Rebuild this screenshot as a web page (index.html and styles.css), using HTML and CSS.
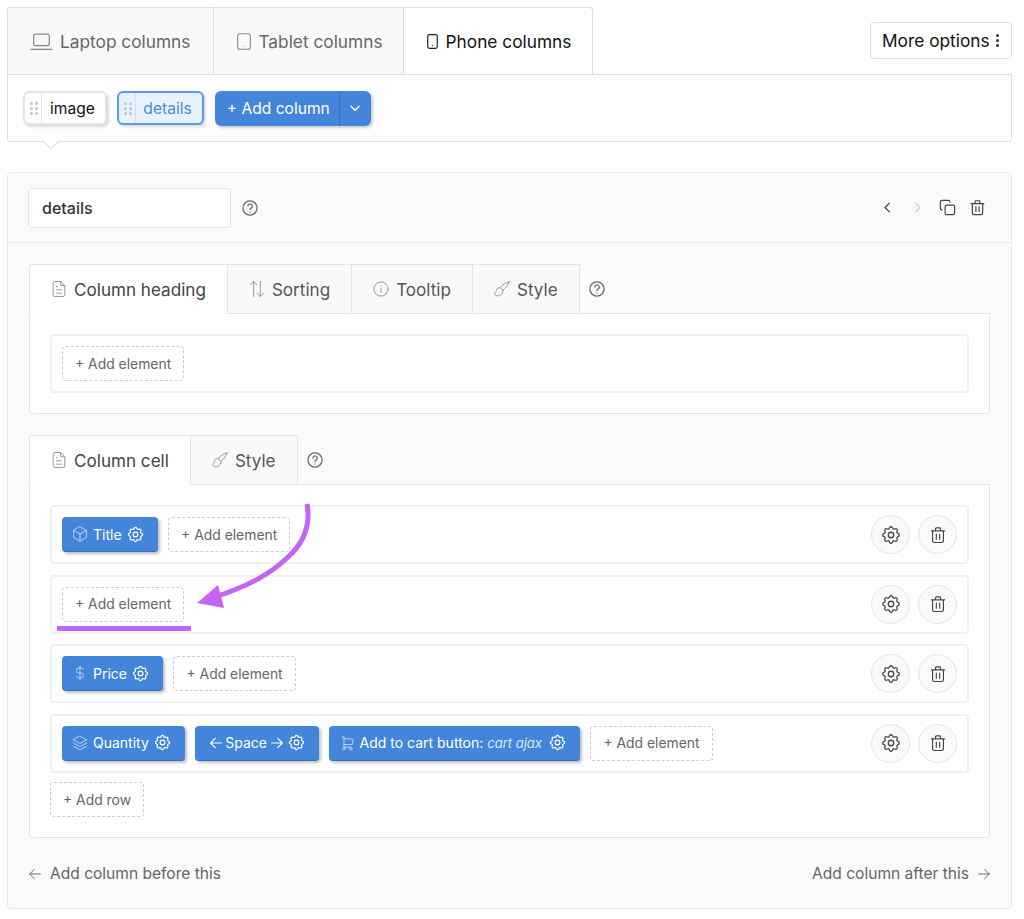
FILE: index.html
```html
<!DOCTYPE html>
<html lang="en">
<head>
    <meta charset="UTF-8">
    <meta name="viewport" content="width=device-width, initial-scale=1.0">
    <title>Column settings</title>
    <link rel="stylesheet" href="styles.css">
</head>
<body>

    <!-- shared icons -->
    <svg class="icon-defs" width="0" height="0">
        <symbol id="i-laptop" viewBox="0 0 24 24"><rect x="4.5" y="5" width="15" height="11" rx="1.5"/><path d="M2 19.500h20"/></symbol>
        <symbol id="i-tablet" viewBox="0 0 14 17"><rect x="0.7" y="0.7" width="12.600" height="15.600" rx="2"/><path d="M7 13.200v.1"/></symbol>
        <symbol id="i-phone" viewBox="0 0 11 15"><rect x="0.7" y="0.7" width="9.600" height="13.600" rx="1.800"/><path d="M5.500 11.500v.1"/></symbol>
        <symbol id="i-doc" viewBox="0 0 24 24"><path d="M7 3h7l5 5v11a2 2 0 0 1-2 2H7a2 2 0 0 1-2-2V5a2 2 0 0 1 2-2z"/><path d="M14 3v5h5M9 9h1M9 13h6M9 17h6"/></symbol>
        <symbol id="i-sort" viewBox="0 0 24 24"><path d="M8 21V3M4 7l4-4 4 4M16 3v18M12 17l4 4 4-4"/></symbol>
        <symbol id="i-info" viewBox="0 0 24 24"><circle cx="12" cy="12" r="8.500"/><path d="M12 11v5M12 8v.1"/></symbol>
        <symbol id="i-brush" viewBox="0 0 24 24"><path d="M20.500 3.500c-4 .5-8 3.500-10.500 7l3 3c3.500-2.500 6.500-6.500 7.500-10z"/><path d="M10 10.500c-2-.5-4 .5-4.500 2.500-.3 1.500-1 3-2.500 4 .5 2.500 3 4 6 3 2.500-.8 4.500-3.500 4-6.500"/></symbol>
        <symbol id="i-help" viewBox="0 0 24 24"><circle cx="12" cy="12" r="8.500"/><path d="M9.500 9.700a2.600 2.600 0 1 1 4 2.200c-.9.6-1.500 1.100-1.500 2.100M12 16.800v.1"/></symbol>
        <symbol id="i-gear" viewBox="0 0 24 24"><path d="M10.325 4.317c.426-1.756 2.924-1.756 3.350 0a1.724 1.724 0 0 0 2.573 1.066c1.543-.94 3.310.826 2.370 2.370a1.724 1.724 0 0 0 1.065 2.572c1.756.426 1.756 2.924 0 3.350a1.724 1.724 0 0 0-1.066 2.573c.94 1.543-.826 3.310-2.370 2.370a1.724 1.724 0 0 0-2.572 1.065c-.426 1.756-2.924 1.756-3.350 0a1.724 1.724 0 0 0-2.573-1.066c-1.543.94-3.310-.826-2.370-2.370a1.724 1.724 0 0 0-1.065-2.572c-1.756-.426-1.756-2.924 0-3.350a1.724 1.724 0 0 0 1.066-2.573c-.94-1.543.826-3.310 2.370-2.370.996.608 2.296.07 2.572-1.065z"/><circle cx="12" cy="12" r="3"/></symbol>
        <symbol id="i-trash" viewBox="0 0 24 24"><path d="M4 7h16M9 7V4.500a1 1 0 0 1 1-1h4a1 1 0 0 1 1 1V7M5.500 7v12a2 2 0 0 0 2 2h9a2 2 0 0 0 2-2V7M10 11v6M14 11v6"/></symbol>
        <symbol id="i-copy" viewBox="0 0 24 24"><rect x="9" y="9" width="12" height="12" rx="2"/><path d="M5 15a2 2 0 0 1-2-2V5a2 2 0 0 1 2-2h8a2 2 0 0 1 2 2"/></symbol>
        <symbol id="i-left" viewBox="0 0 24 24"><path d="M15 5l-7 7 7 7"/></symbol>
        <symbol id="i-right" viewBox="0 0 24 24"><path d="M9 5l7 7-7 7"/></symbol>
        <symbol id="i-down" viewBox="0 0 24 24"><path d="M5 9l7 7 7-7"/></symbol>
        <symbol id="i-arrow-l" viewBox="0 0 24 24"><path d="M20 12H4M11 5l-7 7 7 7"/></symbol>
        <symbol id="i-arrow-r" viewBox="0 0 24 24"><path d="M4 12h16M13 5l7 7-7 7"/></symbol>
        <symbol id="i-cube" viewBox="0 0 24 24"><path d="M12 2.500l8.500 4.800v9.400L12 21.500l-8.500-4.800V7.300z"/><path d="M3.500 7.300L12 12l8.500-4.700M12 12v9.500"/></symbol>
        <symbol id="i-dollar" viewBox="0 0 24 24"><path d="M17 7.500A4 4 0 0 0 13.500 5.500h-3a3.200 3.200 0 0 0 0 6.500h3a3.200 3.200 0 0 1 0 6.500h-3A4 4 0 0 1 7 16.500M12 2.500v19"/></symbol>
        <symbol id="i-layers" viewBox="0 0 24 24"><path d="M12 3l9 4.800-9 4.800-9-4.800z"/><path d="M3 12l9 4.800 9-4.800M3 16.200L12 21l9-4.800"/></symbol>
        <symbol id="i-cart" viewBox="0 0 24 24"><circle cx="8" cy="19.500" r="1.700"/><circle cx="17" cy="19.500" r="1.700"/><path d="M17 17.500H8V4H5M8 6l12 1-1 7H8"/></symbol>
    </svg>

    <div class="top-bar">
        <div class="device-tabs">
            <div class="device-tab tab-laptop"><svg class="ico-laptop"><use href="#i-laptop"/></svg>Laptop columns</div>
            <div class="device-tab tab-tablet"><svg class="ico-tablet"><use href="#i-tablet"/></svg>Tablet columns</div>
            <div class="device-tab active"><svg class="ico-phone"><use href="#i-phone"/></svg>Phone columns</div>
        </div>
        <button class="more-btn">More options <span class="dots"><i></i><i></i><i></i></span></button>
    </div>

    <div class="columns-panel">
        <div class="col-pill">
            <span class="grip"><i></i><i></i><i></i><i></i><i></i><i></i></span>
            <span class="col-name">image</span>
        </div>
        <div class="col-pill selected">
            <span class="grip"><i></i><i></i><i></i><i></i><i></i><i></i></span>
            <span class="col-name">details</span>
        </div>
        <div class="add-col">
            <span class="add-col-main">+ Add column</span>
            <span class="add-col-drop"><svg class="ico-sm"><use href="#i-down"/></svg></span>
        </div>
    </div>

    <div class="editor">
        <div class="editor-head">
            <div class="name-input">details</div>
            <svg class="help"><use href="#i-help"/></svg>
            <div class="head-actions">
                <svg class="act nav"><use href="#i-left"/></svg>
                <svg class="act nav off"><use href="#i-right"/></svg>
                <svg class="act"><use href="#i-copy"/></svg>
                <svg class="act"><use href="#i-trash"/></svg>
            </div>
        </div>

        <div class="editor-body">
            <div class="sub-tabs">
                <div class="sub-tab active"><svg class="ico"><use href="#i-doc"/></svg>Column heading</div>
                <div class="sub-tab"><svg class="ico"><use href="#i-sort"/></svg>Sorting</div>
                <div class="sub-tab"><svg class="ico"><use href="#i-info"/></svg>Tooltip</div>
                <div class="sub-tab"><svg class="ico"><use href="#i-brush"/></svg>Style</div>
                <svg class="help tab-help"><use href="#i-help"/></svg>
            </div>
            <div class="sub-panel">
                <div class="row">
                    <button class="add-el">+ Add element</button>
                </div>
            </div>

            <div class="sub-tabs second">
                <div class="sub-tab active"><svg class="ico"><use href="#i-doc"/></svg>Column cell</div>
                <div class="sub-tab"><svg class="ico"><use href="#i-brush"/></svg>Style</div>
                <svg class="help tab-help"><use href="#i-help"/></svg>
            </div>
            <div class="sub-panel rows">
                <div class="row">
                    <div class="el"><svg class="el-ico"><use href="#i-cube"/></svg>Title<svg class="el-gear"><use href="#i-gear"/></svg></div>
                    <button class="add-el">+ Add element</button>
                    <div class="row-actions">
                        <span class="round"><svg><use href="#i-gear"/></svg></span>
                        <span class="round"><svg class="round-trash"><use href="#i-trash"/></svg></span>
                    </div>
                </div>
                <div class="row">
                    <button class="add-el">+ Add element</button>
                    <div class="row-actions">
                        <span class="round"><svg><use href="#i-gear"/></svg></span>
                        <span class="round"><svg class="round-trash"><use href="#i-trash"/></svg></span>
                    </div>
                </div>
                <div class="row">
                    <div class="el"><svg class="el-ico"><use href="#i-dollar"/></svg>Price<svg class="el-gear"><use href="#i-gear"/></svg></div>
                    <button class="add-el">+ Add element</button>
                    <div class="row-actions">
                        <span class="round"><svg><use href="#i-gear"/></svg></span>
                        <span class="round"><svg class="round-trash"><use href="#i-trash"/></svg></span>
                    </div>
                </div>
                <div class="row">
                    <div class="el"><svg class="el-ico"><use href="#i-layers"/></svg>Quantity<svg class="el-gear"><use href="#i-gear"/></svg></div>
                    <div class="el"><span class="space-label"><svg class="el-arrow"><use href="#i-arrow-l"/></svg>Space<svg class="el-arrow"><use href="#i-arrow-r"/></svg></span><svg class="el-gear"><use href="#i-gear"/></svg></div>
                    <div class="el"><svg class="el-ico"><use href="#i-cart"/></svg><span>Add to cart button: <em>cart ajax</em></span><svg class="el-gear"><use href="#i-gear"/></svg></div>
                    <button class="add-el">+ Add element</button>
                    <div class="row-actions">
                        <span class="round"><svg><use href="#i-gear"/></svg></span>
                        <span class="round"><svg class="round-trash"><use href="#i-trash"/></svg></span>
                    </div>
                </div>
                <button class="add-el add-row">+ Add row</button>
            </div>

            <div class="editor-foot">
                <span class="foot-link"><svg class="foot-ico"><use href="#i-arrow-l"/></svg>Add column before this</span>
                <span class="foot-link">Add column after this<svg class="foot-ico"><use href="#i-arrow-r"/></svg></span>
            </div>
        </div>
    </div>

    <!-- purple annotation drawn over the screenshot -->
    <svg class="annotation" width="1024" height="919" viewBox="0 0 1024 919">
        <path class="note-line" d="M307 504c4 22-3 39-20 54-16 15-36 27-72 39"/>
        <path class="note-head" d="M197 603l21-18 6 23z"/>
        <rect class="note-bar" x="57" y="626" width="134" height="5"/>
    </svg>

</body>
</html>
```

FILE: styles.css
```css
* {
    box-sizing: border-box;
}
body {
    font-family: Inter, "Noto Sans", sans-serif;
    background-color: #fff;
    color: #333;
    margin: 0;
    padding: 7px 12px 10px 7px;
    position: relative;
    height: 919px;
    overflow: hidden;
}
.icon-defs {
    position: absolute;
}
svg {
    fill: none;
    stroke: currentColor;
    stroke-width: 1.5;
    stroke-linecap: round;
    stroke-linejoin: round;
    flex-shrink: 0;
}

/* top tabs */
.top-bar {
    display: flex;
    justify-content: space-between;
    align-items: center;
    height: 68px;
    margin-bottom: -1px;
    position: relative;
}
.device-tabs {
    display: flex;
    height: 68px;
}
.device-tab {
    display: flex;
    align-items: center;
    gap: 8px;
    padding: 0 21px 0 23px;
    font-size: 17.3px;
    color: #666;
    background-color: #f9f9f9;
    border: 1px solid #ddd;
    border-left: none;
}
.device-tab:first-child {
    border-left: 1px solid #ddd;
    border-top-left-radius: 3px;
}
.device-tab:last-child {
    border-top-right-radius: 3px;
}
.device-tab.active {
    color: #111;
    background-color: #fff;
    border-bottom-color: #fff;
}
.tab-laptop {
    padding-right: 23px;
}
.tab-tablet {
    gap: 7px;
    padding-right: 20px;
}
.ico-laptop {
    width: 25px;
    height: 25px;
    margin: 0 -2px;
    stroke-width: 1.2;
    color: #888;
}
.ico-tablet {
    width: 14px;
    height: 17px;
    stroke-width: 1.1;
    color: #888;
}
.ico-phone {
    width: 11px;
    height: 15px;
    stroke-width: 1.2;
    color: #222;
}
.more-btn {
    display: flex;
    align-items: center;
    justify-content: space-between;
    height: 37px;
    width: 142px;
    padding: 0 12px 0 11px;
    font: 17.3px Inter, sans-serif;
    white-space: nowrap;
    color: #111;
    background-color: #fff;
    border: 1px solid #ddd;
    border-radius: 4px;
    margin-top: -1px;
}
.dots {
    display: flex;
    flex-direction: column;
    gap: 2px;
}
.dots i {
    width: 3px;
    height: 3px;
    border-radius: 50%;
    background-color: #333;
}

/* columns bar */
.columns-panel {
    display: flex;
    align-items: center;
    gap: 10.5px;
    height: 68px;
    padding: 0 15px;
    border: 1px solid #ddd;
    border-radius: 0 0 3px 3px;
    position: relative;
    background-color: #fff;
}
.columns-panel::after {
    content: "";
    position: absolute;
    left: 37px;
    bottom: -6px;
    width: 11px;
    height: 11px;
    background-color: #fff;
    border-right: 1px solid #ddd;
    border-bottom: 1px solid #ddd;
    transform: rotate(45deg);
}
.col-pill {
    display: flex;
    align-items: stretch;
    height: 34px;
    font-size: 15.6px;
    color: #111;
    background-color: #fff;
    border: 2px solid #e4e4e4;
    border-radius: 6px;
    box-shadow: 2px 2px 3px rgba(0, 0, 0, 0.15);
}
.grip {
    display: grid;
    grid-template-columns: 3px 3px;
    gap: 2px;
    align-content: center;
    padding: 0 5px;
    width: 17px;
    border-right: 1px solid #e4e4e4;
}
.grip i {
    width: 3px;
    height: 3px;
    background-color: #c4c4c4;
    border-radius: 50%;
}
.col-name {
    display: flex;
    align-items: center;
    padding: 0 10px 0 8px;
}
.col-pill.selected {
    color: #4a8ce0;
    background-color: #e8f2fd;
    border-color: #5a9ae6;
}
.col-pill.selected .grip {
    border-right-color: #d0dfee;
}
.col-pill.selected .col-name {
    padding: 0 10.5px 0 7px;
}
.add-col {
    display: flex;
    height: 35px;
    font-size: 15.6px;
    color: #fff;
    background-color: #4285db;
    border-radius: 6px;
    box-shadow: 2px 2px 3px rgba(0, 0, 0, 0.2);
}
.add-col-main {
    display: flex;
    align-items: center;
    width: 125px;
    padding-left: 12px;
    border-right: 1px solid #3670bb;
}
.add-col-drop {
    display: flex;
    align-items: center;
    justify-content: center;
    width: 31px;
}
.ico-sm {
    width: 14px;
    height: 14px;
    stroke-width: 2.5;
}

/* editor */
.editor {
    margin-top: 30px;
    height: 737px;
    background-color: #fafafa;
    border: 1px solid #e8e8e8;
    border-radius: 4px;
}
.editor-head {
    display: flex;
    align-items: center;
    height: 70px;
    padding: 0 24px 0 20px;
    border-bottom: 1px solid #e8e8e8;
}
.name-input {
    display: flex;
    align-items: center;
    width: 203px;
    height: 40px;
    padding: 0 13px;
    font-size: 16px;
    font-weight: 500;
    color: #333;
    background-color: #fff;
    border: 1px solid #e4e4e4;
    border-radius: 4px;
}
.help {
    width: 20px;
    height: 20px;
    margin-left: 9px;
    color: #666;
}
.head-actions {
    display: flex;
    align-items: center;
    gap: 11px;
    margin-left: auto;
    color: #444;
}
.act {
    width: 19px;
    height: 19px;
}
.act.nav {
    width: 15px;
    height: 15px;
    margin: 0 2px;
    stroke-width: 2;
}
.act.off {
    color: #ccc;
}
.editor-body {
    padding: 21px 21px 0;
}

/* sub tabs */
.sub-tabs {
    display: flex;
    align-items: center;
    height: 50px;
    margin-bottom: -1px;
    position: relative;
}
.sub-tabs.second {
    margin-top: 21px;
}
.sub-tab {
    display: flex;
    align-items: center;
    gap: 7px;
    height: 100%;
    padding: 0 21px;
    font-size: 17.1px;
    color: #555;
    background-color: #f9f9f9;
    border: 1px solid #e4e4e4;
    border-left: none;
}
.ico {
    width: 20px;
    height: 20px;
    margin: 0 -2px;
    stroke-width: 1.2;
    color: #999;
}
.sub-tab.active {
    color: #444;
    background-color: #fff;
    border-left: 1px solid #e4e4e4;
    border-bottom-color: #fff;
    border-top-left-radius: 3px;
}
.tab-help {
    margin-left: 7px;
}
.sub-panel {
    padding: 20px;
    background-color: #fff;
    border: 1px solid #e4e4e4;
    border-radius: 0 0 4px 4px;
}
.rows {
    display: flex;
    flex-direction: column;
    gap: 10.5px;
}

/* rows + elements */
.row {
    display: flex;
    align-items: center;
    gap: 10px;
    height: 59px;
    padding: 0 10px;
    background-color: #fff;
    border: 2px solid #f0f0f0;
    border-radius: 4px;
}
.add-el {
    display: flex;
    align-items: center;
    height: 35px;
    padding: 0 12px;
    font: 13.9px Inter, sans-serif;
    color: #666;
    background-color: #fff;
    border: 1px dashed #ccc;
    border-radius: 4px;
}
.add-row {
    align-self: flex-start;
    margin-top: -1px;
}
.el {
    display: flex;
    align-items: center;
    height: 35px;
    padding: 0 13px 0 9px;
    font-size: 14px;
    font-weight: 400;
    color: #fff;
    background-color: #4285db;
    border-bottom: 1px solid #3670bb;
    border-radius: 4px;
    box-shadow: 2px 2px 3px rgba(0, 0, 0, 0.25);
}
.el em {
    font-size: 13px;
    font-weight: 400;
    color: #dbe8fa;
    margin-right: 2px;
}
.el-ico {
    width: 18px;
    height: 18px;
    margin-right: 4px;
    color: #c5daf6;
    stroke-width: 1.2;
}
.el-gear {
    width: 19px;
    height: 19px;
    margin-left: 4.5px;
}
.el-arrow {
    width: 16px;
    height: 16px;
    stroke-width: 1.8;
}
.space-label {
    display: flex;
    align-items: center;
    gap: 1.5px;
    padding-left: 3.5px;
    margin-right: -2.5px;
}
.row-actions {
    display: flex;
    gap: 8px;
    margin-left: auto;
}
.round {
    display: flex;
    align-items: center;
    justify-content: center;
    width: 39px;
    height: 39px;
    color: #444;
    background-color: #fafafa;
    border: 1px solid #e4e4e4;
    border-radius: 50%;
}
.round svg {
    width: 22px;
    height: 22px;
    stroke-width: 1.4;
}
.round .round-trash {
    width: 20px;
    height: 20px;
}

/* footer links */
.editor-foot {
    display: flex;
    justify-content: space-between;
    margin-top: 26px;
}
.foot-link {
    display: flex;
    align-items: center;
    gap: 9px;
    font-size: 15.55px;
    color: #666;
}
.foot-ico {
    width: 16px;
    height: 16px;
    margin: 0 -2px;
    stroke-width: 1.4;
}

/* annotation */
.annotation {
    position: absolute;
    left: 0;
    top: 0;
    pointer-events: none;
}
.note-line {
    fill: none;
    stroke: #c563f5;
    stroke-width: 5;
    stroke-linecap: butt;
}
.note-head,
.note-bar {
    fill: #c563f5;
    stroke: none;
}
```
